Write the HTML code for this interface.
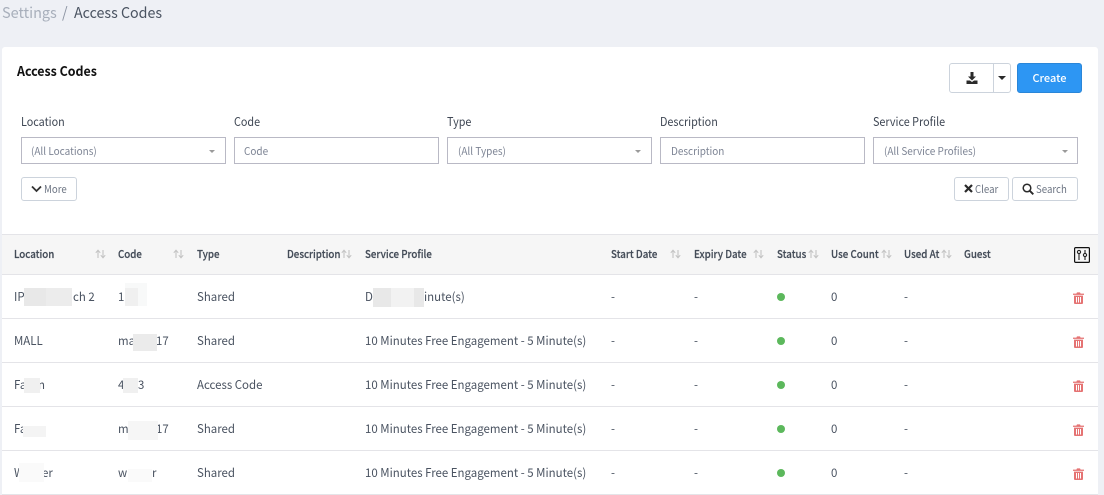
<!DOCTYPE html>
<html><head><meta charset="utf-8">
<style>
html,body{margin:0;padding:0}
body{width:1104px;height:495px;overflow:hidden;background:#eef0f5;position:relative;font-family:"Noto Sans CJK JP","Liberation Sans",sans-serif;font-size:12px;color:#4a5361}
.t{position:absolute;white-space:nowrap;line-height:20px;height:20px;transform:scaleX(.955);transform-origin:0 50%}
.b{position:absolute;box-sizing:border-box}
.h{font-weight:500;color:#444c58;font-size:11px;top:244px;transform:scaleX(.885);-webkit-text-stroke:.2px #444c58}
.l{font-size:12px;color:#3f4754;top:112px;transform:scaleX(.9)}
.p{font-size:10.500px;color:#7d8494;top:142px;transform:scaleX(.95)}
.bt{font-size:10.500px;color:#6d7583;top:180px;transform:scaleX(.92)}
.f{position:absolute;box-sizing:border-box;top:137px;height:27px;width:205px;border:1px solid #b9b9c5;background:#fff}
.btn{position:absolute;box-sizing:border-box;background:#fff;border:1px solid #ccd3dc;border-radius:3px}
.mt{position:absolute;width:0;height:0;border-left:3.500px solid transparent;border-right:3.500px solid transparent;border-top:3.500px solid #9a9a9a;top:150px}
.lineh{position:absolute;left:2px;width:1096px;height:1px;background:#e4e4e8}
.s{position:absolute;top:249px;width:11px;height:10px}
.d{position:absolute;left:777px;width:8px;height:8px;border-radius:50%;background:#5cb85c}
.tr{position:absolute;left:1073px;width:11px;height:12px}
.m{position:absolute}
</style></head>
<body>
<svg width="0" height="0" style="position:absolute"><defs>
<symbol id="so" viewBox="0 0 11 10"><path d="M3 9V1.500M.8 3.800 3 1.200l2.200 2.600" fill="none" stroke="#c4c4c4" stroke-width="1.100"/><path d="M8 1v7.500M5.800 6.200 8 8.800l2.200-2.600" fill="none" stroke="#c4c4c4" stroke-width="1.100"/></symbol>
<symbol id="tr" viewBox="0 0 11 12"><path d="M0 1.600h3.400L4 .4h3l.6 1.200H11v1.300H0z" fill="#e57373"/><path fill-rule="evenodd" d="M1 3.600h9V11a1 1 0 0 1-1 1H2a1 1 0 0 1-1-1zM3 5v5.500h1V5zM5 5v5.500h1V5zM7 5v5.500h1V5z" fill="#e57373"/></symbol>
</defs></svg>

<div class="t" style="left:2px;top:3px;font-size:15px;color:#a8afbb;transform:scaleX(.965)">Settings</div>
<div class="t" style="left:62px;top:3px;font-size:15px;color:#8d95a3">/</div>
<div class="t" style="left:74px;top:3px;font-size:15px;color:#4a5361;transform:scaleX(.95)">Access Codes</div>

<div class="b" style="left:2px;top:47px;width:1096px;height:448px;background:#fff;border-radius:3px 3px 0 0"></div>
<div class="t" style="left:17px;top:60px;font-size:13.500px;font-weight:700;color:#111;transform:scaleX(.92)">Access Codes</div>

<div class="btn" style="left:949px;top:63px;width:62px;height:30px"></div>
<div class="b" style="left:993px;top:64px;width:1px;height:28px;background:#ccd3dc"></div>
<svg class="m" style="left:966px;top:72px" width="12" height="12" viewBox="0 0 12 12"><path d="M4.500 0h3v4.500H10L6 8.500 2 4.500h2.500z" fill="#2a2a2a"/><path d="M.5 8.500H4L6 10l2-1.500h3.500V12H.5z" fill="#2a2a2a"/></svg>
<div class="b" style="left:998px;top:76px;width:0;height:0;border-left:4px solid transparent;border-right:4px solid transparent;border-top:4px solid #2a2a2a"></div>
<div class="b" style="left:1017px;top:63px;width:65px;height:30px;background:#2d96f3;border:1px solid #2a86d8;border-radius:3px"></div>
<div class="t" style="left:1017px;width:65px;text-align:center;top:68px;font-size:11px;font-weight:500;color:#fff;transform:none">Create</div>

<div class="t l" style="left:21px">Location</div>
<div class="t l" style="left:234px">Code</div>
<div class="t l" style="left:447px">Type</div>
<div class="t l" style="left:660px">Description</div>
<div class="t l" style="left:873px">Service Profile</div>

<div class="f" style="left:21px"></div>
<div class="f" style="left:234px"></div>
<div class="f" style="left:447px"></div>
<div class="f" style="left:660px"></div>
<div class="f" style="left:873px"></div>
<div class="t p" style="left:31px">(All Locations)</div>
<div class="t p" style="left:244px">Code</div>
<div class="t p" style="left:458px">(All Types)</div>
<div class="t p" style="left:671px">Description</div>
<div class="t p" style="left:884px">(All Service Profiles)</div>
<div class="mt" style="left:209px"></div>
<div class="mt" style="left:635px"></div>
<div class="mt" style="left:1062px"></div>

<div class="btn" style="left:21px;top:177px;width:56px;height:24px"></div>
<svg class="m" style="left:31px;top:185px" width="11" height="8" viewBox="0 0 11 8"><path d="M1 1.500 5.500 6 10 1.500" fill="none" stroke="#333" stroke-width="1.800"/></svg>
<div class="t bt" style="left:44px">More</div>

<div class="btn" style="left:954px;top:177px;width:55px;height:24px"></div>
<svg class="m" style="left:964px;top:184px" width="9" height="9" viewBox="0 0 9 9"><path d="M1 1l7 7M8 1 1 8" stroke="#2a2a2a" stroke-width="2.200" fill="none"/></svg>
<div class="t bt" style="left:975px">Clear</div>
<div class="btn" style="left:1012px;top:177px;width:66px;height:24px"></div>
<svg class="m" style="left:1022px;top:183px" width="12" height="12" viewBox="0 0 12 12"><circle cx="5" cy="5" r="3.800" fill="none" stroke="#2a2a2a" stroke-width="1.500"/><path d="M7.800 7.800l3.500 3.500" stroke="#2a2a2a" stroke-width="1.900"/></svg>
<div class="t bt" style="left:1036px">Search</div>

<div class="b" style="left:2px;top:234px;width:1096px;height:41px;background:#f6f6f6;border-top:1px solid #e4e4e8;border-bottom:1px solid #e4e4e8"></div>
<div class="t h" style="left:14px">Location</div>
<div class="t h" style="left:118px">Code</div>
<div class="t h" style="left:197px">Type</div>
<div class="t h" style="left:287px">Description</div>
<div class="t h" style="left:365px">Service Profile</div>
<div class="t h" style="left:611px">Start Date</div>
<div class="t h" style="left:694px">Expiry Date</div>
<div class="t h" style="left:777px">Status</div>
<div class="t h" style="left:831px">Use Count</div>
<div class="t h" style="left:904px">Used At</div>
<div class="t h" style="left:964px">Guest</div>
<svg class="s" style="left:95px"><use href="#so"/></svg>
<svg class="s" style="left:173px"><use href="#so"/></svg>
<svg class="s" style="left:341px"><use href="#so"/></svg>
<svg class="s" style="left:670px"><use href="#so"/></svg>
<svg class="s" style="left:753px"><use href="#so"/></svg>
<svg class="s" style="left:808px"><use href="#so"/></svg>
<svg class="s" style="left:881px"><use href="#so"/></svg>
<svg class="s" style="left:941px"><use href="#so"/></svg>
<svg class="m" style="left:1074px;top:247px" width="16" height="16" viewBox="0 0 16 16"><rect x=".6" y=".6" width="14.800" height="14.800" rx="1" fill="none" stroke="#111" stroke-width="1.200"/><path d="M5 7v6M11 3v3M11 10v3" stroke="#222" stroke-width="1.100"/><circle cx="5" cy="5" r="1.600" fill="none" stroke="#222" stroke-width="1.100"/><circle cx="11" cy="8" r="1.600" fill="none" stroke="#222" stroke-width="1.100"/></svg>

<div class="lineh" style="top:318px"></div>
<div class="lineh" style="top:362px"></div>
<div class="lineh" style="top:406px"></div>
<div class="lineh" style="top:450px"></div>
<div class="lineh" style="top:494px"></div>

<div class="t" style="left:14px;top:287px">IP</div><div class="t" style="left:73px;top:287px">ch 2</div>
<div class="t" style="left:118px;top:287px">1</div>
<div class="t" style="left:197px;top:287px">Shared</div>
<div class="t" style="left:365px;top:287px">D</div><div class="t" style="left:424px;top:287px">inute(s)</div>
<div class="t" style="left:610.500px;top:287px">-</div><div class="t" style="left:693.500px;top:287px">-</div>
<div class="d" style="top:293px"></div>
<div class="t" style="left:831px;top:287px">0</div><div class="t" style="left:904px;top:287px">-</div>
<svg class="tr" style="top:292px"><use href="#tr"/></svg>

<div class="t" style="left:14px;top:331px">MALL</div>
<div class="t" style="left:118px;top:331px">ma</div><div class="t" style="left:156px;top:331px">17</div>
<div class="t" style="left:197px;top:331px">Shared</div>
<div class="t" style="left:365px;top:331px">10 Minutes Free Engagement - 5 Minute(s)</div>
<div class="t" style="left:610.500px;top:331px">-</div><div class="t" style="left:693.500px;top:331px">-</div>
<div class="d" style="top:337px"></div>
<div class="t" style="left:831px;top:331px">0</div><div class="t" style="left:904px;top:331px">-</div>
<svg class="tr" style="top:336px"><use href="#tr"/></svg>

<div class="t" style="left:14px;top:375px">Fa</div><div class="t" style="left:38px;top:375px">n</div>
<div class="t" style="left:118px;top:375px">4</div><div class="t" style="left:138px;top:375px">3</div>
<div class="t" style="left:197px;top:375px">Access Code</div>
<div class="t" style="left:365px;top:375px">10 Minutes Free Engagement - 5 Minute(s)</div>
<div class="t" style="left:610.500px;top:375px">-</div><div class="t" style="left:693.500px;top:375px">-</div>
<div class="d" style="top:381px"></div>
<div class="t" style="left:831px;top:375px">0</div><div class="t" style="left:904px;top:375px">-</div>
<svg class="tr" style="top:380px"><use href="#tr"/></svg>

<div class="t" style="left:14px;top:419px">Fa</div>
<div class="t" style="left:118px;top:419px">m</div><div class="t" style="left:156px;top:419px">17</div>
<div class="t" style="left:197px;top:419px">Shared</div>
<div class="t" style="left:365px;top:419px">10 Minutes Free Engagement - 5 Minute(s)</div>
<div class="t" style="left:610.500px;top:419px">-</div><div class="t" style="left:693.500px;top:419px">-</div>
<div class="d" style="top:425px"></div>
<div class="t" style="left:831px;top:419px">0</div><div class="t" style="left:904px;top:419px">-</div>
<svg class="tr" style="top:424px"><use href="#tr"/></svg>

<div class="t" style="left:14px;top:463px">W</div><div class="t" style="left:42px;top:463px">er</div>
<div class="t" style="left:118px;top:463px">w</div><div class="t" style="left:152px;top:463px">r</div>
<div class="t" style="left:197px;top:463px">Shared</div>
<div class="t" style="left:365px;top:463px">10 Minutes Free Engagement - 5 Minute(s)</div>
<div class="t" style="left:610.500px;top:463px">-</div><div class="t" style="left:693.500px;top:463px">-</div>
<div class="d" style="top:469px"></div>
<div class="t" style="left:831px;top:463px">0</div><div class="t" style="left:904px;top:463px">-</div>
<svg class="tr" style="top:468px"><use href="#tr"/></svg>

<div class="b" style="left:24px;top:288px;width:22px;height:18px;background:#e8e8e8"></div>
<div class="b" style="left:46px;top:288px;width:26px;height:18px;background:#ececec"></div>
<div class="b" style="left:125px;top:283px;width:22px;height:23px;background:#f8f9f9"></div>
<div class="b" style="left:125px;top:288px;width:13px;height:18px;background:#f0f0f0"></div>
<div class="b" style="left:373px;top:288px;width:18px;height:19px;background:#e8e8e8"></div>
<div class="b" style="left:391px;top:288px;width:23px;height:19px;background:#f2f2f2"></div>
<div class="b" style="left:414px;top:288px;width:10px;height:19px;background:#e8e8e8"></div>
<div class="b" style="left:133px;top:334px;width:24px;height:17px;background:#ebebeb"></div>
<div class="b" style="left:24px;top:378px;width:16px;height:15px;background:#f0f0f0"></div>
<div class="b" style="left:123px;top:378px;width:15px;height:15px;background:#f0f0f0"></div>
<div class="b" style="left:23px;top:426px;width:23px;height:11px;background:#f4f4f4"></div>
<div class="b" style="left:128px;top:421px;width:30px;height:19px;background:#f6f6f6"></div>
<div class="b" style="left:19px;top:463px;width:25px;height:19px;background:#fafafa"></div>
<div class="b" style="left:128px;top:469px;width:24px;height:13px;background:#fafafa"></div>
</body></html>
